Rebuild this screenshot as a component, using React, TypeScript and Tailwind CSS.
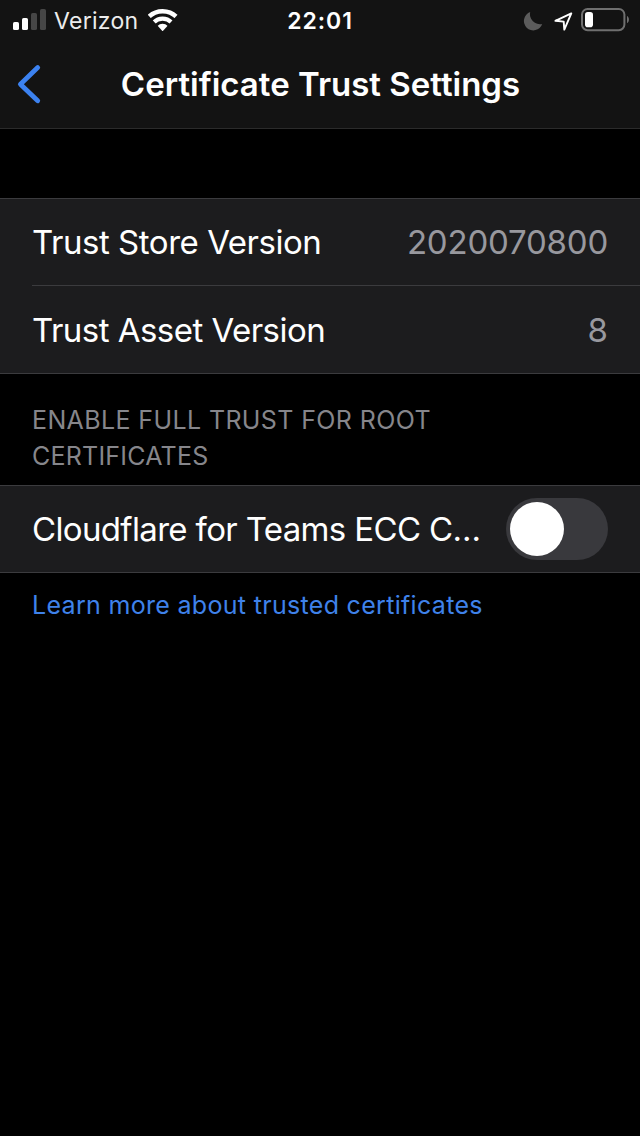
import type { ReactNode } from 'react';

function SignalIcon() {
  return (
    <svg width="34" height="22" viewBox="0 0 34 22" className="shrink-0">
      <rect x="0" y="13" width="6" height="8" rx="1.6" fill="#fff" />
      <rect x="9" y="9" width="6" height="12" rx="1.6" fill="#fff" />
      <rect x="18" y="4" width="6" height="17" rx="1.6" fill="#464646" />
      <rect x="27" y="0" width="6" height="21" rx="1.6" fill="#464646" />
    </svg>
  );
}

function WifiIcon() {
  return (
    <svg width="30" height="22" viewBox="0 0 30 22" className="shrink-0">
      <clipPath id="wedge">
        <path d="M14.6 22.3L-5.5 0V-4H34.7V0Z" />
      </clipPath>
      <g clipPath="url(#wedge)" fill="none" stroke="#fff">
        <circle cx="14.6" cy="22" r="19.8" strokeWidth="4.4" />
        <circle cx="14.6" cy="22" r="12.4" strokeWidth="4.2" />
        <circle cx="14.6" cy="22" r="7.2" fill="#fff" stroke="none" />
      </g>
    </svg>
  );
}

function MoonIcon() {
  return (
    <svg width="20" height="20" viewBox="523 11 20 20" className="shrink-0">
      <path d="M530.2 12.1A9.4 9.4 0 1 0 542.2 24A10 10 0 0 1 530.2 12.1Z" fill="#5c5c5c" />
    </svg>
  );
}

function LocationIcon() {
  return (
    <svg width="20" height="20" viewBox="553 11 20 20" className="shrink-0">
      <path
        d="M571.3 13.4L555.4 20.8L563.7 21.6L564.3 29.6Z"
        fill="none"
        stroke="#fff"
        strokeWidth="1.9"
        strokeLinejoin="round"
      />
    </svg>
  );
}

function BatteryIcon() {
  return (
    <svg width="49" height="24" viewBox="0 0 49 24" className="shrink-0">
      <rect x="1" y="1" width="42.4" height="21.2" rx="5.6" fill="none" stroke="#6f6f6f" strokeWidth="2" />
      <rect x="4" y="4" width="8" height="15.2" rx="2.8" fill="#fff" />
      <path d="M46 8C48.6 9.2 48.6 14 46 15.2Z" fill="#6f6f6f" />
    </svg>
  );
}

function Row({ label, children }: { label: ReactNode; children: ReactNode }) {
  return (
    <div className="flex h-full items-center justify-between pr-8 text-[33px] leading-10">
      <span className="whitespace-nowrap text-white">{label}</span>
      {children}
    </div>
  );
}

export default function App() {
  return (
    <div className="flex h-[1136px] w-[640px] flex-col overflow-hidden bg-black font-['Inter','Liberation_Sans',sans-serif]">
      <header className="h-[129px] shrink-0 border-b border-[#2b2b2b] bg-[#131313]">
        <div className="grid h-10 grid-cols-[1fr_auto_1fr] items-center pr-[10px] pl-[13px] text-[23px] leading-[38px] text-white">
          <div className="flex h-10 items-center">
            <SignalIcon />
            <span className="ml-[7px] w-[94px] pt-0.5 tracking-[0.27px] text-[#ececec]">Verizon</span>
            <WifiIcon />
          </div>
          <span className="-ml-[3px] pt-0.5 font-semibold tracking-[0.95px]">22:01</span>
          <div className="flex h-10 items-center justify-end">
            <span className="pt-0.5">
              <MoonIcon />
            </span>
            <span className="w-[10px]" />
            <span className="pt-0.5">
              <LocationIcon />
            </span>
            <span className="w-2" />
            <BatteryIcon />
          </div>
        </div>
        <div className="grid h-[88px] grid-cols-[80px_1fr_80px] items-center">
          <button aria-label="Back" className="pl-4">
            <svg width="28" height="42" viewBox="0 0 28 42">
              <path
                d="M21.7 4.6L4.4 21.2L21.7 37.8"
                fill="none"
                stroke="#3c82f0"
                strokeWidth="4.8"
                strokeLinecap="round"
                strokeLinejoin="round"
              />
            </svg>
          </button>
          <h1 className="pl-px text-center text-[33px] leading-10 font-semibold whitespace-nowrap text-white">
            Certificate Trust Settings
          </h1>
        </div>
      </header>

      <section className="mt-[69px] h-[176px] border-y border-[#3b3b3e] bg-[#1c1c1e] pl-8">
        <div className="h-[87px] border-b border-[#3b3b3e]">
          <Row label={<span className="tracking-[-0.46px]">Trust Store Version</span>}>
            <span className="tracking-[-0.2px] text-[#98989e]">2020070800</span>
          </Row>
        </div>
        <div className="h-[88px]">
          <Row label={<span className="tracking-[-0.53px]">Trust Asset Version</span>}>
            <span className="text-[#98989e]">8</span>
          </Row>
        </div>
      </section>

      <h2 className="mt-7 pl-8 text-[25px] leading-9 text-[#86868b]">
        <span className="block tracking-[0.38px]">ENABLE FULL TRUST FOR ROOT</span>
        <span className="block tracking-[0.22px]">CERTIFICATES</span>
      </h2>

      <section className="mt-[11px] h-[88px] border-y border-[#3b3b3e] bg-[#1c1c1e] pl-8">
        <Row label={<span className="tracking-[-0.65px]">Cloudflare for Teams ECC C…</span>}>
          <button role="switch" aria-checked="false" aria-label="Trust certificate" className="h-[62px] w-[102px] shrink-0 rounded-full bg-[#39393d] p-1">
            <span className="block size-[54px] rounded-full bg-white" />
          </button>
        </Row>
      </section>

      <a className="mt-[14px] pl-8 text-[25px] leading-9 tracking-[0.31px] text-[#3f82ea]">Learn more about trusted certificates</a>
    </div>
  );
}
